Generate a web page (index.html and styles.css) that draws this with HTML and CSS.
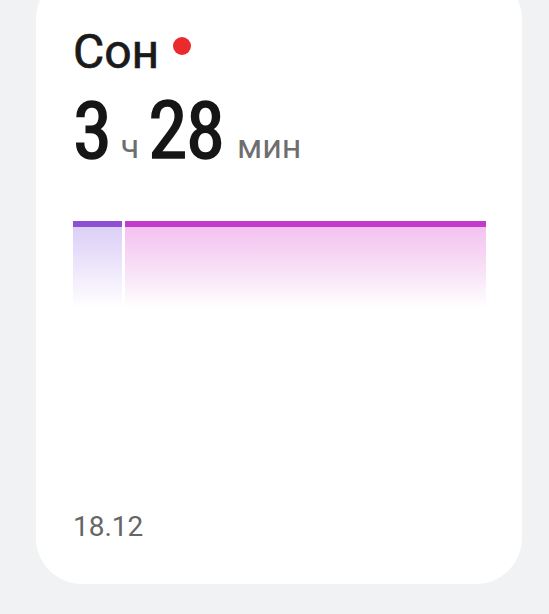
FILE: index.html
```html
<!DOCTYPE html>
<html lang="ru">
<head>
<meta charset="utf-8">
<link rel="stylesheet" href="styles.css">
</head>
<body>
<div class="card">
  <div class="title">
    <span class="title-text">Сон</span>
    <span class="dot"></span>
  </div>
  <div class="value">
    <span class="num">3</span>
    <span class="unit unit-h">ч</span>
    <span class="num">28</span>
    <span class="unit unit-m">мин</span>
  </div>
  <div class="chart">
    <div class="seg seg-light" style="width:49px"></div>
    <div class="seg seg-rem"></div>
  </div>
  <div class="date">18.12</div>
</div>
</body>
</html>
```
FILE: styles.css
```css
html, body {
  margin: 0;
  padding: 0;
  background: #f1f2f4;
}
body {
  width: 549px;
  height: 614px;
  overflow: hidden;
  font-family: Roboto, "Noto Sans", sans-serif;
}
.card {
  box-sizing: border-box;
  margin: -27px 0 0 36px;
  width: 486px;
  height: 611px;
  background: #ffffff;
  border-radius: 46px;
  padding: 51px 36px 0 37px;
  display: flex;
  flex-direction: column;
}
.title {
  display: flex;
  align-items: center;
  height: 56px;
}
.title-text {
  font-size: 48px;
  font-weight: 400;
  line-height: 56px;
  color: #1a1a1a;
  -webkit-text-stroke: 0.7px #1a1a1a;
}
.dot {
  width: 18px;
  height: 18px;
  border-radius: 50%;
  background: #ea2a2c;
  margin-left: 14px;
  margin-top: -12px;
}
.value {
  display: flex;
  align-items: baseline;
  margin-top: 6px;
  height: 91px;
}
.num {
  font-family: "Liberation Sans Narrow", "Roboto Condensed", "DejaVu Sans Condensed", sans-serif;
  font-size: 79px;
  font-weight: 400;
  line-height: 90px;
  color: #161616;
  letter-spacing: -1.2px;
  -webkit-text-stroke: 1.6px #161616;
}
.unit {
  font-size: 34px;
  color: #6e6e6e;
}
.unit-h {
  margin: 0 9px 0 10px;
}
.unit-m {
  margin-left: 13px;
}
.chart {
  display: flex;
  gap: 3px;
  margin-top: 44px;
  height: 87px;
}
.seg {
  height: 100%;
}
.seg-light {
  border-top: 6px solid #8e4fd3;
  background: linear-gradient(to bottom, #dccff6 0%, #ece4fb 45%, #ffffff 100%);
  box-sizing: border-box;
}
.seg-rem {
  flex: 1;
  border-top: 6px solid #c23ccb;
  background: linear-gradient(to bottom, #f3c2f0 0%, #f7dcf5 45%, #ffffff 100%);
  box-sizing: border-box;
}
.date {
  margin-top: auto;
  margin-bottom: 40px;
  font-size: 28px;
  line-height: 34px;
  color: #666666;
}
```
